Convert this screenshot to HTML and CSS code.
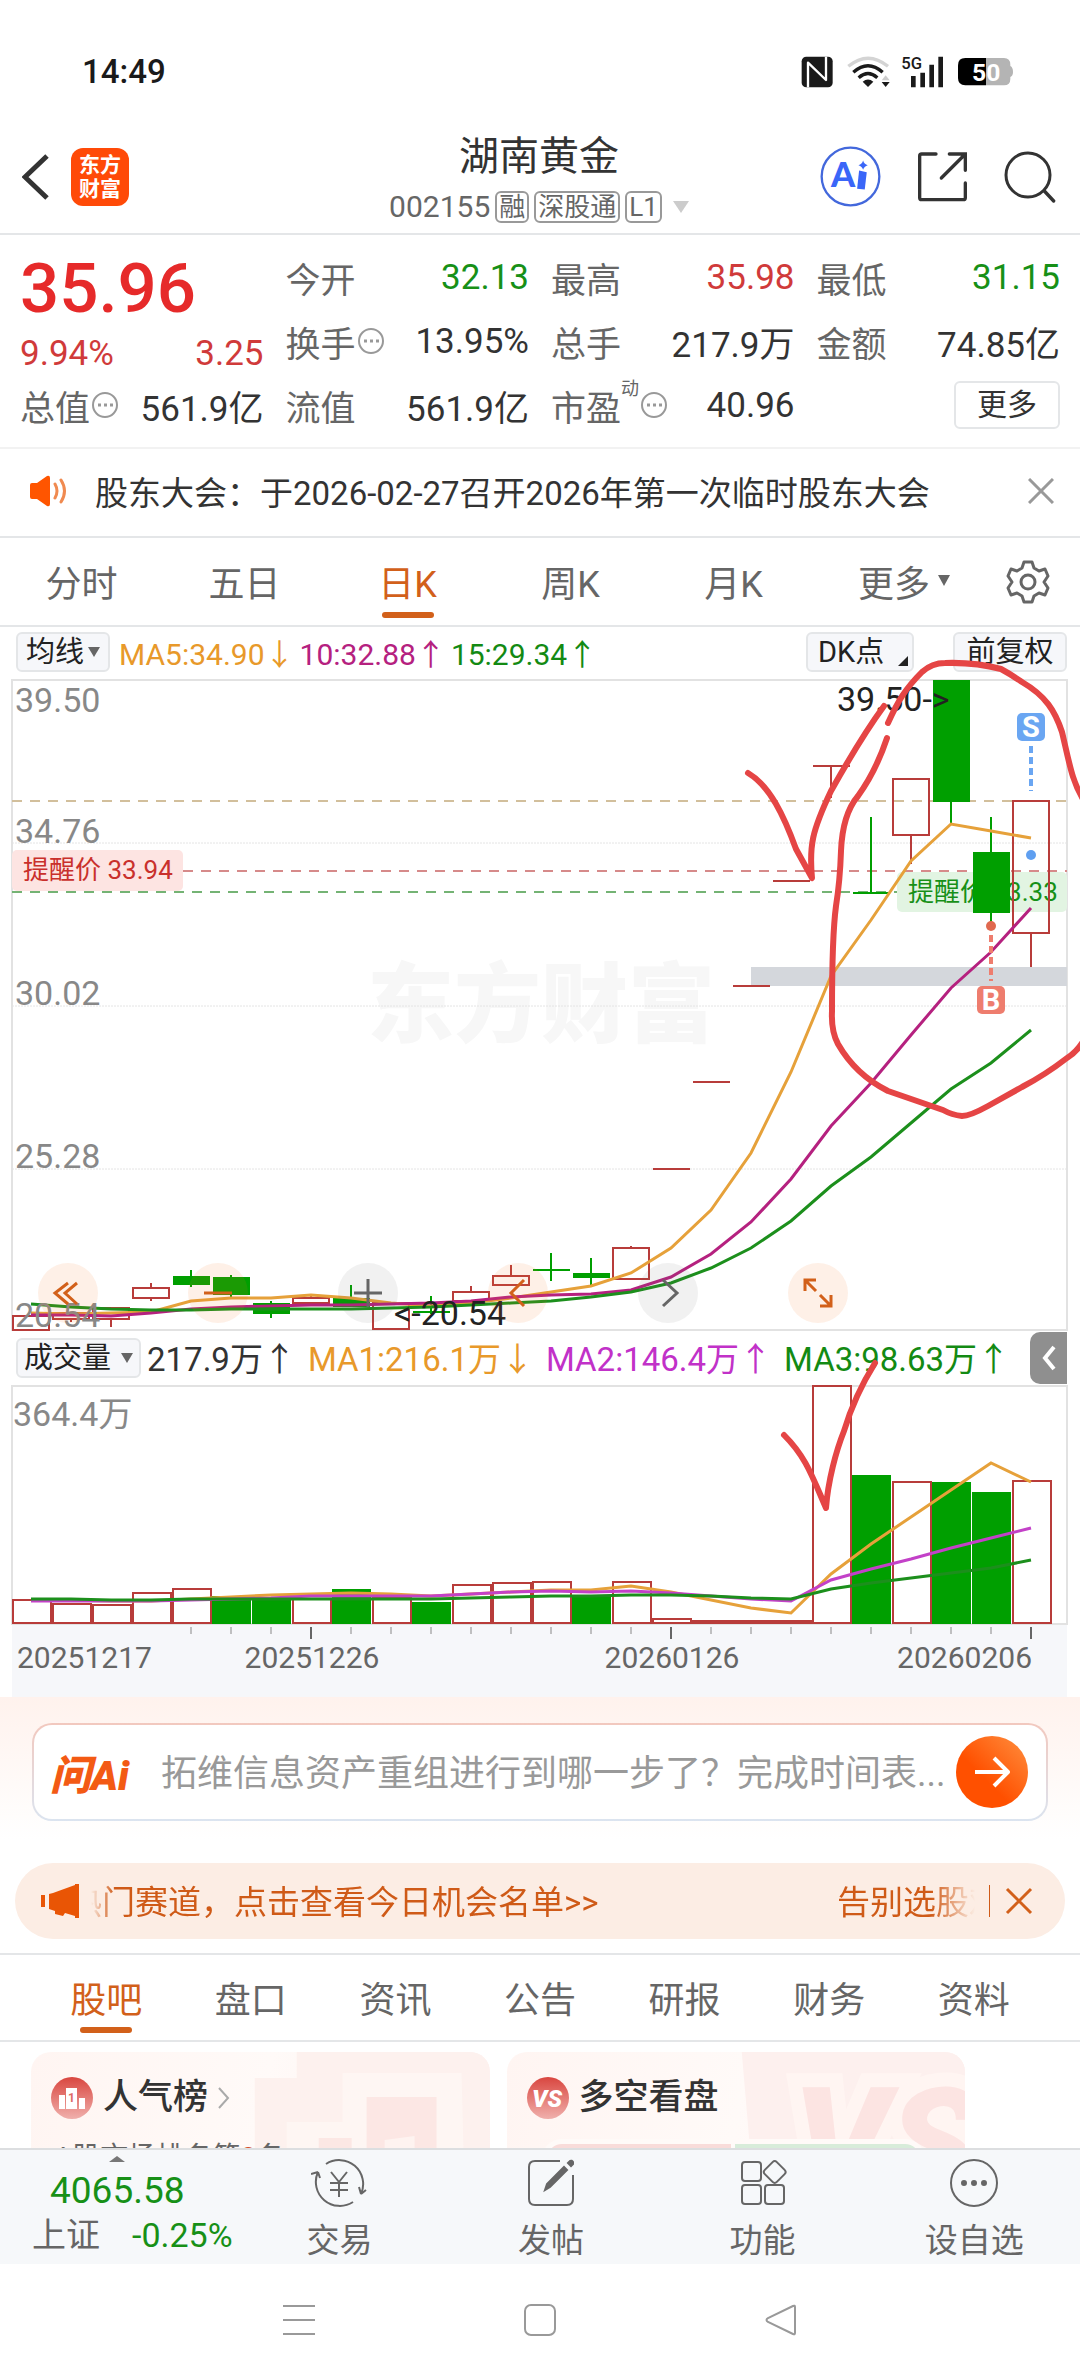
FILE: index.html
```html
<!DOCTYPE html>
<html lang="zh-CN">

<head>
  <meta charset="UTF-8">
  <meta name="viewport" content="width=device-width, initial-scale=1.0">
  <title>湖南黄金 002155</title>
  <link rel="stylesheet" href="styles.css">
</head>

<body>
  <!-- 状态栏 -->
  <div class="status-bar">
    <span>14:49</span>
    <svg class="status-icons" viewBox="60 40 642 105">
      <rect x="65" y="48" width="93" height="92" rx="14" fill="#1a1a1a" />
      <path d="M84 140V66L138 118V48" fill="none" stroke="#fff" stroke-width="7" stroke-linejoin="round" />
      <path d="M205 77Q264 28 324 77" fill="none" stroke="#d4d4d4" stroke-width="10" />
      <path d="M220 95Q264 56 308 95M236 111Q264 86 292 111" fill="none" stroke="#1a1a1a" stroke-width="10" />
      <path d="M264 139L248 123Q264 110 280 123Z" fill="#1a1a1a" />
      <path d="M305 119L317 104L329 119Z" fill="#ccc" />
      <path d="M305 124H329L317 139Z" fill="#1a1a1a" />
      <text x="364" y="86" font-size="50" font-weight="500" fill="#1a1a1a">5G</text>
      <path d="M400 106V140M428 96V140M455 72V140M482 48V140" stroke="#1a1a1a" stroke-width="14" />
      <path d="M618 52H672Q691 52 691 72V76Q699 80 699 94Q699 106 691 109V115Q691 134 672 134H618Z" fill="#b4b4b4" />
      <path d="M618 52H556Q534 52 534 74V112Q534 134 556 134H618Z" fill="#000" />
      <text x="576" y="120" font-size="74" font-weight="700" fill="#fff">50</text>
    </svg>
  </div>

  <header class="header">
    <div class="header-left">
      <button class="icon-btn" aria-label="返回">
        <svg width="28" height="48" viewBox="0 0 28 48"><path d="M25 3L3 24L25 45" fill="none" stroke="#333" stroke-width="5" /></svg>
      </button>
      <a class="logo" href="#">东方<br>财富</a>
    </div>
    <div class="header-title">
      <h1>湖南黄金</h1>
      <div class="code">
        <span>002155</span>
        <span class="tag">融</span>
        <span class="tag">深股通</span>
        <span class="tag">L1</span>
        <i class="caret"></i>
      </div>
    </div>
    <div class="header-right">
      <button class="icon-btn" aria-label="Ai">
        <svg width="61" height="61" viewBox="117 320 184 184">
          <circle cx="209" cy="412" r="87" fill="#fff" stroke="#4368dc" stroke-width="7" />
          <text x="150" y="445" font-size="104" class="ai-text">A</text>
          <path d="M235 394L258 399L252 451L229 449Z" fill="#3a66f8" />
          <path d="M247 364Q250 375 261 378Q250 381 247 392Q244 381 233 378Q244 375 247 364Z" fill="#3a66f8" />
        </svg>
      </button>
      <button class="icon-btn" aria-label="分享">
        <svg width="51" height="51" viewBox="408 336 153 153">
          <path d="M465 345H422Q416 345 416 351V476Q416 482 422 482H547Q553 482 553 476V432M505 345H553V394M550 348L481 417" fill="none" stroke="#333" stroke-width="10" stroke-linecap="round" />
        </svg>
      </button>
      <button class="icon-btn" aria-label="搜索">
        <svg width="52" height="52" viewBox="672 333 156 156">
          <circle cx="744" cy="405" r="66" fill="none" stroke="#333" stroke-width="9" />
          <path d="M793 453L821 483" stroke="#333" stroke-width="10" stroke-linecap="round" />
        </svg>
      </button>
    </div>
  </header>

  <main class="main">
    <!-- 行情 -->
    <section class="quote">
      <div class="price-box">
        <strong class="price">35.96</strong>
        <div class="row red"><span>9.94%</span><span>3.25</span></div>
      </div>
      <div class="row"><label>今开</label><span class="green">32.13</span></div>
      <div class="row"><label>最高</label><span class="red">35.98</span></div>
      <div class="row"><label>最低</label><span class="green">31.15</span></div>
      <div class="row"><label>换手<svg class="info" viewBox="0 0 26 26"><use href="#info" /></svg></label><span>13.95%</span></div>
      <div class="row"><label>总手</label><span>217.9万</span></div>
      <div class="row"><label>金额</label><span>74.85亿</span></div>
      <div class="row"><label>总值<svg class="info" viewBox="0 0 26 26"><use href="#info" /></svg></label><span>561.9亿</span></div>
      <div class="row"><label>流值</label><span>561.9亿</span></div>
      <div class="row"><label>市盈<sup>动</sup><svg class="info" viewBox="0 0 26 26"><use href="#info" /></svg></label><span>40.96</span></div>
      <div class="row row-end"><button class="more-btn">更多</button></div>
    </section>

    <div class="notice">
      <svg width="40" height="32" viewBox="0 0 40 32">
        <path d="M1 10Q1 8 3 8H8L18 1Q21 0 21 3V29Q21 32 18 31L8 24H3Q1 24 1 22Z" fill="#ff5500" />
        <path d="M26 9Q30 16 26 23M32 5Q39 16 32 27" fill="none" stroke="#f08a50" stroke-width="3" stroke-linecap="round" />
      </svg>
      <p>股东大会：于2026-02-27召开2026年第一次临时股东大会</p>
      <button class="icon-btn" aria-label="关闭">
        <svg width="26" height="26" viewBox="0 0 26 26"><path d="M1 1L25 25M25 1L1 25" stroke="#999" stroke-width="3" /></svg>
      </button>
    </div>

    <nav class="tabs period-tabs">
      <a href="#">分时</a>
      <a href="#">五日</a>
      <a href="#" class="active">日K</a>
      <a href="#">周K</a>
      <a href="#">月K</a>
      <a href="#">更多<i class="caret"></i></a>
      <button class="icon-btn" aria-label="设置">
        <svg width="44" height="44" viewBox="0 0 44 44" fill="none" stroke="#666" stroke-width="3" stroke-linejoin="round">
          <path d="M18 2H26L28 8L33 11L39 9L42 16L38 22L42 28L39 35L33 33L28 36L26 42H18L16 36L11 33L5 35L2 28L6 22L2 16L5 9L11 11L16 8Z" />
          <circle cx="22" cy="22" r="7" />
        </svg>
      </button>
    </nav>

    <section class="chart">
      <div class="ma-row">
        <button class="chip">均线<i class="caret"></i></button>
        <span class="c-orange">MA5:34.90↓</span>
        <span class="c-purple">10:32.88↑</span>
        <span class="c-green">15:29.34↑</span>
        <button class="chip chip-dk">DK点<i class="corner"></i></button>
        <button class="chip chip-fq">前复权</button>
      </div>

      <!-- K线图 -->
      <div class="kline">
        <svg class="plot" viewBox="0 678 1080 652">
          <text x="367" y="1035" font-size="87" font-weight="900" fill="#f7f7f7">东方财富</text>
          <path d="M12 842H1067M12 1005H1067M12 1168H1067" stroke="#e4e4e4" stroke-width="1" stroke-dasharray="2 1" />
          <path d="M12 679H1067V1329H12Z" fill="none" stroke="#e2e2e2" stroke-width="2" />

          <path d="M12 800H1067" stroke="#d2bf9c" stroke-width="2" stroke-dasharray="10 8" />
          <path d="M183 870H1067" stroke="#d68a8a" stroke-width="2" stroke-dasharray="10 8" />
          <path d="M12 891H897" stroke="#74b374" stroke-width="2" stroke-dasharray="10 8" />
          <rect x="12" y="849" width="171" height="41" rx="5" fill="#fde4e2" />
          <text x="23" y="878" font-size="26" fill="#c9302c">提醒价 33.94</text>
          <rect x="897" y="871" width="170" height="40" rx="5" fill="#e2f4e2" />
          <text x="908" y="900" font-size="26" fill="#179017">提醒价 33.33</text>
          <rect x="751" y="966" width="316" height="19" fill="#d4d7dc" />

          <!-- 阳线 -->
          <path class="up" d="M13 1315h36v14h-36zM53 1312h36v6h-36zM71 1318v3M93 1307h36v11h-36zM111 1318v8
            M133 1287h36v10h-36zM151 1282v5M151 1297v3M293 1297h36v5h-36zM311 1293v4M311 1302v3
            M373 1302h36v26h-36zM453 1291h36v9h-36zM471 1285v6M493 1275h36v9h-36zM511 1264v11
            M613 1247h36v31h-36zM631 1245v2M653 1168h37M693 1081h37M733 985h37M773 880h37
            M813 765h37M831 765v32M893 778h36v56h-36zM911 834v29M1013 800h36v132h-36zM1031 932v34" />
          <!-- 阴线 -->
          <path class="down" d="M173 1275h37v9h-37zM213 1276h37v18h-37zM253 1302h37v11h-37zM333 1297h37v9h-37z
            M413 1310h37v2h-37zM533 1268h37v2h-37zM573 1272h37v5h-37zM853 891h37v2h-37z
            M933 679h37v122h-37zM973 851h37v61h-37z" />
          <path class="down-wick" d="M191 1269v17M231 1274v22M271 1300v17M351 1284v22M431 1295v18M551 1252v28
            M591 1257v27M871 816v76M951 801v22M991 816v110" />

          <g class="ma">
            <polyline stroke="#e6a13a" points="31,1312 71,1313 111,1312 151,1311 191,1300 231,1297 271,1297 311,1294 351,1297 391,1302 431,1305 471,1302 511,1297 551,1291 591,1285 631,1272 671,1247 711,1209 751,1152 791,1071 831,975 871,919 911,860 951,823 991,830 1031,837" />
            <polyline stroke="#b5217f" points="31,1314 71,1314 111,1315 151,1312 191,1308 231,1306 271,1305 311,1304 351,1304 391,1303 431,1302 471,1300 511,1296 551,1294 591,1293 631,1289 671,1276 711,1253 751,1221 791,1178 831,1125 871,1082 911,1034 951,987 991,951 1031,907" />
            <polyline stroke="#1c8f1c" points="31,1303 71,1306 111,1308 151,1309 191,1309 231,1308 271,1308 311,1308 351,1308 391,1307 431,1306 471,1304 511,1302 551,1300 591,1296 631,1291 671,1282 711,1267 751,1247 791,1220 831,1185 871,1156 911,1122 951,1088 991,1062 1031,1029" />
          </g>

          <g class="axis">
            <text x="15" y="711">39.50</text>
            <text x="15" y="842">34.76</text>
            <text x="15" y="1004">30.02</text>
            <text x="15" y="1167">25.28</text>
            <text x="15" y="1326">20.54</text>
          </g>
          <g font-size="34" fill="#222">
            <text x="837" y="710">39.50-&gt;</text>
            <text x="394" y="1324">&lt;-20.54</text>
          </g>

          <!-- 买卖点 -->
          <g stroke-width="4" stroke-dasharray="7 4">
            <path d="M1031 745V790" stroke="#6aa6f2" />
            <path d="M991 934V980" stroke="#ee7d6e" />
          </g>
          <circle cx="1031" cy="854" r="5" fill="#5f9ff0" />
          <circle cx="991" cy="925" r="5" fill="#e0694f" />
          <rect x="1017" y="712" width="28" height="28" rx="5" fill="#6aa6f2" />
          <rect x="977" y="985" width="28" height="28" rx="5" fill="#ee7d6e" />
          <g font-size="29" font-weight="700" fill="#fff" text-anchor="middle">
            <text x="1031" y="736">S</text>
            <text x="991" y="1009">B</text>
          </g>
        </svg>
        <div class="tools">
          <button aria-label="最左"><svg viewBox="0 0 60 60"><path d="M39 20L27 30L39 41M30 20L17 30L30 41" /></svg></button>
          <button aria-label="缩小"><svg viewBox="0 0 60 60"><path d="M16 30H44" /></svg></button>
          <button class="gray" aria-label="放大"><svg viewBox="0 0 60 60"><path d="M16 30H44M30 16V44" /></svg></button>
          <button aria-label="左移"><svg viewBox="0 0 60 60"><path d="M36 17L23 30L36 43" /></svg></button>
          <button class="gray" aria-label="右移"><svg viewBox="0 0 60 60"><path d="M25 17L39 30L25 43" /></svg></button>
          <button aria-label="全屏"><svg viewBox="0 0 60 60"><path d="M28 17H17V28M17 17L28 28M32 43H43V32M43 43L32 32" /></svg></button>
        </div>
      </div>

      <div class="vol-row">
        <button class="chip">成交量<i class="caret"></i></button>
        <span>217.9万↑</span>
        <span class="c-orange">MA1:216.1万↓</span>
        <span class="c-violet">MA2:146.4万↑</span>
        <span class="c-green">MA3:98.63万↑</span>
        <button class="drawer" aria-label="展开">
          <svg width="14" height="26" viewBox="0 0 14 26"><path d="M12 2L3 13L12 24" fill="none" stroke="#fff" stroke-width="4" /></svg>
        </button>
      </div>

      <!-- 成交量 -->
      <svg class="plot" viewBox="0 1384 1080 312">
        <rect x="12" y="1624" width="1055" height="72" fill="#f6f7fa" />
        <path d="M12 1385H1067V1623H12Z" fill="none" stroke="#e2e2e2" stroke-width="2" />
        <text class="axis" x="13" y="1425">364.4万</text>
        <path class="up" d="M13 1622V1599h38v23zM53 1622v-19h38v19zM93 1622v-18h38v18zM133 1622v-30h38v30z
          M173 1622v-34h38v34zM293 1622v-24h38v24zM373 1622v-25h38v25zM453 1622v-38h38v38z
          M493 1622v-40h38v40zM533 1622v-41h38v41zM613 1622v-41h38v41zM653 1622v-4h38v4z
          M693 1622v-2h38v2zM733 1622v-2h38v2zM773 1622v-2h38v2zM813 1622v-237h38v237z
          M893 1622v-141h38v141zM1013 1622v-142h38v142z" />
        <path class="down" d="M212 1623v-28h39v28zM252 1623v-27h39v27zM332 1623v-35h39v35zM412 1623v-22h39v22z
          M572 1623v-28h39v28zM852 1623v-149h39v149zM932 1623v-142h39v142zM972 1623v-132h39v132z" />
        <g class="ma">
          <polyline stroke="#e6a13a" points="31,1599 71,1599 111,1600 151,1600 191,1598 231,1596 271,1594 311,1593 351,1592 391,1593 431,1595 471,1593 511,1591 551,1589 591,1589 631,1585 671,1591 711,1599 751,1607 791,1612 831,1573 871,1543 911,1516 951,1489 991,1462 1031,1481" />
          <polyline stroke="#c341c8" points="31,1600 71,1600 111,1600 151,1600 191,1599 231,1598 271,1597 311,1595 351,1595 391,1595 431,1595 471,1593 511,1591 551,1590 591,1591 631,1590 671,1592 711,1595 751,1598 791,1600 831,1579 871,1568 911,1558 951,1547 991,1537 1031,1527" />
          <polyline stroke="#1c8f1c" points="31,1598 71,1598 111,1599 151,1599 191,1598 231,1598 271,1598 311,1598 351,1598 391,1598 431,1598 471,1597 511,1596 551,1595 591,1595 631,1594 671,1594 711,1595 751,1597 791,1598 831,1588 871,1582 911,1577 951,1572 991,1567 1031,1559" />
        </g>
        <path d="M191 1626v7M231 1626v7M271 1626v7M351 1626v7M391 1626v7M431 1626v7M471 1626v7M511 1626v7M551 1626v7M591 1626v7M631 1626v7
          M711 1626v7M751 1626v7M791 1626v7M831 1626v7M871 1626v7M911 1626v7M951 1626v7M991 1626v7" stroke="#888" />
        <path d="M311 1626v12M671 1626v12M1031 1626v12" stroke="#666" stroke-width="2" />
        <g font-size="30" fill="#666">
          <text x="17" y="1667">20251217</text>
          <text x="312" y="1667" text-anchor="middle">20251226</text>
          <text x="672" y="1667" text-anchor="middle">20260126</text>
          <text x="1032" y="1667" text-anchor="end">20260206</text>
        </g>
      </svg>

      <!-- 手绘标注 -->
      <svg class="marks" viewBox="0 626 1080 1070">
        <path d="M748 772C770 785 784 815 796 848L812 877C809 845 812 830 831 790C845 765 862 735 884 705" />
        <path d="M888 722C898 700 905 688 922 671Q932 662 945 662Q975 661 1001 668Q1012 674 1022 681C1046 695 1055 710 1062 731C1070 765 1072 780 1084 800" />
        <path d="M1084 1039Q1077 1051 1067 1057Q1045 1074 1022 1086L988 1105Q970 1115 962 1115Q952 1114 943 1109L888 1090C868 1080 850 1064 838 1043Q831 1030 832 1010Q832 935 836 905Q840 880 841 850C842 825 847 808 858 795Q876 770 887 737" />
        <path d="M784 1434C806 1456 812 1475 826 1507C828 1480 836 1450 844 1430C850 1410 860 1386 875 1362" />
      </svg>
    </section>

    <section class="ask">
      <form class="ask-box">
        <label for="ask">问Ai</label>
        <input id="ask" type="text" placeholder="拓维信息资产重组进行到哪一步了？完成时间表...">
        <button type="button" aria-label="发送">
          <svg width="36" height="32" viewBox="0 0 36 32"><path d="M1 16H33M20 2L34 16L20 30" fill="none" stroke="#fff" stroke-width="4" stroke-linejoin="round" /></svg>
        </button>
      </form>
    </section>

    <div class="banner">
      <svg width="38" height="34" viewBox="0 0 38 34">
        <path d="M0 11H4V23H0ZM8 10L12 9L34 1V0H38V34H34V32L24 29L22 32L14 30V27L8 25Z" fill="#e95505" />
      </svg>
      <div class="scroll">
        <span>热门赛道，点击查看今日机会名单&gt;&gt;</span>
        <span>告别选股难</span>
      </div>
      <i class="divider"></i>
      <button class="icon-btn" aria-label="关闭">
        <svg width="28" height="28" viewBox="0 0 28 28"><path d="M2 2L26 26M26 2L2 26" stroke="#d2601a" stroke-width="3" /></svg>
      </button>
    </div>

    <nav class="tabs info-tabs">
      <a href="#" class="active">股吧</a>
      <a href="#">盘口</a>
      <a href="#">资讯</a>
      <a href="#">公告</a>
      <a href="#">研报</a>
      <a href="#">财务</a>
      <a href="#">资料</a>
    </nav>

    <div class="cards">
      <article class="card">
        <svg class="card-bg" viewBox="0 0 459 140">
          <path d="M224 140V26H266V0H459V140Z" fill="#fdf1ee" />
          <path d="M256 140V70H312V21H431L434 140Z" fill="#fef6f3" />
          <path d="M288 140V86H321V140ZM336 140V45H406V140Z" fill="#fce7e4" />
          <path d="M354 140V88L384 84V140Z" fill="#fef3f0" />
        </svg>
        <h2>
          <svg width="42" height="42" viewBox="0 0 42 42">
            <circle cx="21" cy="21" r="21" fill="url(#badge)" />
            <path d="M8 32V18H14V32ZM15 32V11H26V32ZM28 32V21H34V32Z" fill="#fff" />
            <text x="17" y="25" font-size="12" font-weight="700" fill="#dd6a64">1</text>
          </svg>
          人气榜
          <svg width="12" height="22" viewBox="0 0 12 22"><path d="M1 1L10 11L1 21" fill="none" stroke="#aaa" stroke-width="2" /></svg>
        </h2>
        <p>A股市场排名第<b>8</b>名</p>
      </article>
      <article class="card">
        <svg class="card-bg" viewBox="0 0 459 140">
          <path d="M235 0H459V140H247Z" fill="#fdf0ee" />
          <text class="vs-bg" x="286" y="142" font-size="150">VS</text>
        </svg>
        <h2>
          <svg width="42" height="42" viewBox="0 0 42 42">
            <circle cx="21" cy="21" r="21" fill="url(#badge)" />
            <text x="20" y="30" font-size="24" font-weight="900" font-style="italic" text-anchor="middle" fill="#fff">VS</text>
          </svg>
          多空看盘
        </h2>
        <div class="ratio"><i class="bull"></i><i class="bear"></i></div>
      </article>
    </div>
  </main>

  <footer class="toolbar">
    <a class="index" href="#">
      <i class="up-caret"></i>
      <strong>4065.58</strong>
      <span><em>上证</em>-0.25%</span>
    </a>
    <a href="#">
      <svg width="56" height="50" viewBox="0 0 56 50">
        <path d="M15 6A24 24 0 0 1 50 36M50 36L55 32M50 36L48 29M42 44A24 24 0 0 1 7 14M7 14L0 16M7 14L9 20" />
        <path d="M20 14L28 24L36 14M19 25H37M19 32H37M28 24V39" />
      </svg>
      交易
    </a>
    <a href="#">
      <svg width="50" height="50" viewBox="0 0 50 50">
        <path d="M34 3H9Q3 3 3 9V41Q3 47 9 47H41Q47 47 47 41V17" />
        <path class="solid" d="M19 32L21 26L38 9L41 12L24 29ZM42 5L44 3Q46 2 47 4L47 6L45 8Z" />
      </svg>
      发帖
    </a>
    <a href="#">
      <svg width="50" height="50" viewBox="0 0 50 50">
        <rect x="4" y="4" width="19" height="19" rx="3" />
        <rect x="4" y="27" width="19" height="19" rx="3" />
        <rect x="27" y="27" width="19" height="19" rx="3" />
        <rect x="28" y="5" width="17" height="17" rx="3" transform="rotate(45 36 14)" />
      </svg>
      功能
    </a>
    <a href="#">
      <svg width="50" height="50" viewBox="0 0 50 50">
        <circle cx="25" cy="25" r="23" />
        <path class="solid" d="M13 25a2 2 0 1 0 4 0a2 2 0 1 0-4 0M23 25a2 2 0 1 0 4 0a2 2 0 1 0-4 0M33 25a2 2 0 1 0 4 0a2 2 0 1 0-4 0" />
      </svg>
      设自选
    </a>
  </footer>

  <div class="sys-nav">
    <button class="icon-btn" aria-label="最近任务"><svg width="32" height="32" viewBox="0 0 32 32"><path d="M0 2H32M0 16H32M0 30H32" /></svg></button>
    <button class="icon-btn" aria-label="主屏"><svg width="32" height="32" viewBox="0 0 32 32"><rect x="1" y="1" width="30" height="30" rx="6" /></svg></button>
    <button class="icon-btn" aria-label="返回"><svg width="32" height="32" viewBox="0 0 32 32"><path d="M30 3V29Q30 31 28 30L3 18Q0 16 3 14L28 2Q30 1 30 3Z" /></svg></button>
  </div>

  <svg class="defs">
    <symbol id="info" viewBox="0 0 26 26">
      <circle cx="13" cy="13" r="12" fill="none" stroke="#999" stroke-width="2" />
      <path d="M6 13h3M12 13h3M18 13h3" stroke="#999" stroke-width="3" />
    </symbol>
    <linearGradient id="badge" x1="0" y1="0" x2="0" y2="1">
      <stop offset="0" stop-color="#d9463f" />
      <stop offset="1" stop-color="#f0b0ac" />
    </linearGradient>
  </svg>
</body>

</html>
```
FILE: styles.css
```css
* {
  margin: 0;
  padding: 0;
  box-sizing: border-box;
}

:root {
  --text: #333;
  --text-sub: #666;
  --red: #d03a3a;
  --green: #179017;
  --brand: #d2601a;
  --line: #e4e6e8;
  --up: #b83c3a;
  --down: #009f00;
}

body {
  display: flex;
  flex-direction: column;
  height: 100vh;
  background: #fff;
  color: var(--text);
  font-family: Roboto, "Noto Sans CJK SC", sans-serif;
  overflow: hidden;
}

a {
  color: inherit;
  text-decoration: none;
}

button {
  border: none;
  background: none;
  color: inherit;
  font: inherit;
}

svg {
  display: block;
  flex-shrink: 0;
}

.icon-btn {
  display: flex;
  align-items: center;
  justify-content: center;
}

.defs {
  position: absolute;
  width: 0;
  height: 0;
}

.caret {
  border: 6px solid transparent;
  border-top: 11px solid var(--text-sub);
  border-bottom: none;
}

.red {
  color: var(--red);
}

.green {
  color: var(--green);
}

/** 状态栏 */
.status-bar {
  display: flex;
  align-items: center;
  justify-content: space-between;
  flex-shrink: 0;
  height: 120px;
  padding: 22px 66px 0 82px;
  color: #1a1a1a;
  font-size: 33px;
  font-weight: 500;
}

.status-icons {
  width: 214px;
  height: 35px;
}

/** 顶部标题 */
.header {
  display: grid;
  grid-template-columns: 1fr auto 1fr;
  align-items: center;
  flex-shrink: 0;
  height: 115px;
  padding: 0 24px 0 22px;
  border-bottom: 2px solid var(--line);
}

.header-left {
  display: flex;
  align-items: center;
  gap: 21px;
}

.logo {
  width: 58px;
  height: 58px;
  padding-top: 5px;
  border-radius: 12px;
  background: #ff4a08;
  color: #fff;
  font-size: 21px;
  font-weight: 700;
  line-height: 24px;
  text-align: center;
}

.header-title {
  text-align: center;

  & h1 {
    font-size: 40px;
    font-weight: 400;
    line-height: 52px;
  }
}

.code {
  display: flex;
  align-items: center;
  justify-content: center;
  gap: 5px;
  margin-top: 8px;
  color: var(--text-sub);
  font-size: 30px;
  line-height: 32px;

  & .caret {
    margin-left: 6px;
    border-width: 12px 8px 0;
    border-top-color: #ccc;
  }
}

.tag {
  padding: 0 2px;
  border: 2px solid #999;
  border-radius: 6px;
  font-size: 26px;
  line-height: 28px;
}

.header-right {
  display: flex;
  align-items: center;
  justify-content: flex-end;
  gap: 36px;
}

.ai-text {
  fill: #3a66f8;
  font-family: Lato, sans-serif;
  font-weight: 900;
}

.main {
  flex: 1;
  min-height: 0;
  overflow: hidden;
}

/** 行情 */
.quote {
  display: grid;
  grid-template-columns: repeat(4, 1fr);
  grid-auto-rows: 64px;
  column-gap: 22px;
  padding: 10px 20px;
  border-bottom: 2px solid #f2f2f2;
  font-size: 35px;
}

.price-box {
  grid-row: span 2;

  & .row {
    height: 40px;
  }
}

.price {
  display: block;
  color: #e62a2a;
  font-size: 69px;
  font-weight: 500;
  line-height: 88px;
}

.row {
  display: flex;
  align-items: center;
  justify-content: space-between;
  white-space: nowrap;

  & label {
    display: flex;
    align-items: center;
    color: var(--text-sub);
  }

  & sup {
    align-self: flex-start;
    font-size: 18px;
    line-height: 18px;
  }
}

.row-end {
  justify-content: flex-end;
}

.info {
  width: 26px;
  height: 26px;
  margin-left: 2px;
}

.more-btn {
  width: 106px;
  height: 48px;
  border: 2px solid var(--line);
  border-radius: 6px;
  font-size: 30px;
  line-height: 44px;
}

.notice {
  display: flex;
  align-items: center;
  height: 89px;
  padding: 0 26px 3px 29px;
  border-bottom: 2px solid var(--line);
  font-size: 33px;

  & p {
    flex: 1;
    margin-left: 26px;
  }
}

/** 标签页 */
.tabs {
  display: grid;
  height: 89px;
  border-bottom: 2px solid var(--line);
  color: var(--text-sub);
  font-size: 36px;

  & a {
    position: relative;
    display: flex;
    align-items: center;
    justify-content: center;
    padding-bottom: 2px;
  }

  & .caret {
    margin-left: 8px;
  }

  & .active {
    color: var(--brand);
  }

  & .active::after {
    content: '';
    position: absolute;
    bottom: 7px;
    width: 52px;
    height: 6px;
    border-radius: 3px;
    background: var(--brand);
  }
}

.period-tabs {
  grid-template-columns: repeat(5, 163fr) 178fr 70fr;
  padding-right: 17px;
}

.info-tabs {
  grid-template-columns: repeat(7, 1fr);
  padding: 0 34px;
  border-top: 2px solid var(--line);
}

/** 图表 */
.chart {
  position: relative;
}

.plot {
  width: 100%;
  height: auto;

  & .up {
    fill: #fff;
    fill-opacity: 0;
    stroke: var(--up);
    stroke-width: 2;
  }

  & .down {
    fill: var(--down);
  }

  & .down-wick {
    stroke: var(--down);
    stroke-width: 2;
  }

  & .ma {
    fill: none;
    stroke-width: 3;
  }

  & .axis {
    fill: #888;
    font-size: 34px;
  }
}

.ma-row,
.vol-row {
  display: flex;
  align-items: center;
  padding: 0 13px 0 16px;
  white-space: nowrap;
}

.ma-row {
  gap: 5px;
  height: 52px;
  padding-bottom: 3px;
  font-size: 30px;
}

.vol-row {
  gap: 12px;
  height: 54px;
  font-size: 33px;

  & span {
    padding-bottom: 2px;
  }
}

.c-orange {
  color: #e8992a;
}

.c-purple {
  color: #b5217f;
}

.c-violet {
  color: #c131c8;
}

.c-green {
  color: #138a13;
}

.chip {
  position: relative;
  display: flex;
  align-items: center;
  gap: 4px;
  height: 40px;
  padding: 0 6px;
  border: 2px solid var(--line);
  border-radius: 6px;
  background: #f6f7fa;
  color: #222;
  font-size: 29px;
  line-height: 36px;

  & .caret {
    border-width: 10px 6px 0;
  }
}

.ma-row .chip:first-child {
  padding: 0 8px;
  margin-right: 4px;
}

.vol-row .chip:first-child {
  gap: 10px;
  padding: 0 6px;
  margin-right: -6px;
}

.ma-row .chip-dk {
  width: 108px;
  padding-left: 10px;
  margin-left: auto;
  margin-right: 34px;
}

.ma-row .chip-fq {
  width: 114px;
  justify-content: center;
}

.corner {
  position: absolute;
  right: 4px;
  bottom: 4px;
  border-left: 10px solid transparent;
  border-bottom: 10px solid #222;
}

.kline {
  position: relative;
}

.tools {
  position: absolute;
  left: 38px;
  bottom: 8px;
  display: flex;
  gap: 90px;

  & button {
    width: 60px;
    height: 60px;
    border-radius: 50%;
    background: rgba(245, 115, 40, .11);
  }

  & path {
    fill: none;
    stroke: var(--brand);
    stroke-width: 3;
  }

  & .gray {
    background: rgba(100, 100, 100, .09);
  }

  & .gray path {
    stroke: #666;
  }
}

.drawer {
  display: flex;
  align-items: center;
  justify-content: center;
  width: 37px;
  height: 52px;
  margin-left: auto;
  border-radius: 10px 0 0 10px;
  background: #8f8f8f;
}

.marks {
  position: absolute;
  top: 0;
  left: 0;
  width: 100%;
  pointer-events: none;

  & path {
    fill: none;
    stroke: #e54545;
    stroke-width: 6;
    stroke-linecap: round;
    stroke-linejoin: round;
  }
}

/** 问Ai */
.ask {
  height: 142px;
  padding: 26px 32px 0;
  background: linear-gradient(#fff2ed, #fff);
}

.ask-box {
  display: flex;
  align-items: center;
  height: 98px;
  padding: 0 18px 0 16px;
  border: 2px solid transparent;
  border-radius: 20px;
  background: linear-gradient(#fff, #fff) padding-box, linear-gradient(#f2c8be, #dbe4f0) border-box;

  & label {
    width: 111px;
    color: #f35a14;
    font-size: 41px;
    font-style: italic;
    font-weight: 900;
  }

  & input {
    flex: 1;
    min-width: 0;
    padding-top: 3px;
    border: none;
    outline: none;
    background: none;
    font: inherit;
    font-size: 36px;
  }

  & input::placeholder {
    color: #999;
  }

  & button {
    display: flex;
    align-items: center;
    justify-content: center;
    width: 72px;
    height: 72px;
    border-radius: 50%;
    background: linear-gradient(45deg, #ff5000 40%, #ff9040);
  }
}

.banner {
  display: flex;
  align-items: center;
  height: 76px;
  margin: 24px 15px 14px;
  padding: 0 32px 0 26px;
  border-radius: 38px;
  background: #fcede4;
  color: #cf5a17;
  font-size: 33px;

  & .divider {
    width: 1px;
    height: 32px;
    margin: 0 15px 0 14px;
    background: currentColor;
  }
}

.scroll {
  display: flex;
  justify-content: space-between;
  flex: 1;
  min-width: 0;
  margin-left: 12px;
  padding-bottom: 2px;
  overflow: hidden;
  white-space: nowrap;
  mask-image: linear-gradient(90deg, transparent, #000 24px, #000 calc(100% - 44px), transparent 100%);

  & span:first-child {
    margin-left: -22px;
  }

  & span:last-child {
    margin-right: -27px;
  }
}

/** 卡片 */
.cards {
  display: flex;
  gap: 17px;
  padding: 10px 115px 0 31px;
}

.card {
  position: relative;
  flex: 1;
  height: 140px;
  padding: 24px 20px 0;
  border-radius: 20px;
  background: linear-gradient(100deg, #fff5f2, #fffaf8 50%, #fdf0ee);
  overflow: hidden;

  & h2 {
    position: relative;
    display: flex;
    align-items: center;
    gap: 10px;
    height: 44px;
    font-size: 35px;
    font-weight: 500;
    line-height: 40px;
  }

  & p {
    position: relative;
    margin-top: 18px;
    padding-left: 3px;
    color: var(--text-sub);
    font-size: 28px;
    line-height: 40px;
  }

  & b {
    color: #d4502c;
  }
}

.card-bg {
  position: absolute;
  inset: 0;
  width: 100%;
  height: 100%;
}

.vs-bg {
  fill: #fce4e2;
  stroke: #fff5f2;
  stroke-width: 28;
  paint-order: stroke;
  font-weight: 900;
  font-style: italic;
}

.ratio {
  position: relative;
  display: flex;
  gap: 4px;
  height: 40px;
  margin: 19px 20px 0 15px;
  border: 5px solid #fffaf8;
  border-radius: 20px;
  background: #fffaf8;
  overflow: hidden;

  & i {
    flex: 1;
  }

  & .bull {
    background: #f9dcda;
  }

  & .bear {
    background: #d8ecda;
  }
}

/** 底部工具栏 */
.toolbar {
  display: grid;
  grid-template-columns: 233fr repeat(4, 211fr);
  flex-shrink: 0;
  height: 116px;
  border-top: 2px solid #dcdee0;
  background: #f6f8fa;
  color: var(--text-sub);
  font-size: 33px;

  & a {
    display: flex;
    flex-direction: column;
    align-items: center;
    gap: 9px;
    padding-top: 8px;
    line-height: 48px;
  }

  & svg {
    fill: none;
    stroke: #666;
    stroke-width: 2;
  }

  & .solid {
    fill: #666;
  }

  & .index {
    gap: 0;
    padding: 6px 0 0 32px;
    align-items: flex-start;
    color: var(--green);
  }

  & strong {
    padding-left: 18px;
    font-size: 37px;
    font-weight: 400;
    line-height: 58px;
  }

  & span {
    font-size: 34px;
    line-height: 30px;
  }

  & em {
    margin-right: 32px;
    color: var(--text-sub);
    font-style: normal;
  }
}

.up-caret {
  margin-left: 77px;
  border: 8px solid transparent;
  border-bottom: 6px solid #777;
  border-top: none;
}

.sys-nav {
  display: flex;
  align-items: center;
  justify-content: center;
  gap: 209px;
  flex-shrink: 0;
  height: 112px;

  & svg {
    fill: none;
    stroke: #999;
    stroke-width: 2;
  }
}
```
